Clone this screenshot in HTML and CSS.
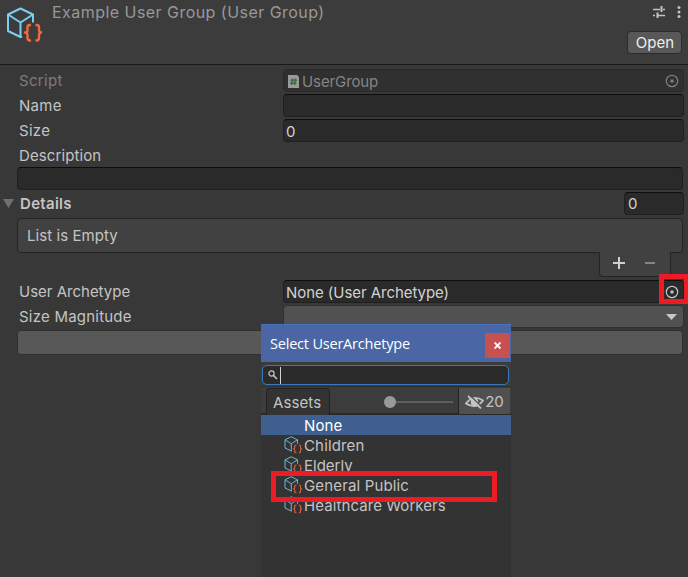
FILE: index.html
```html
<!DOCTYPE html>
<html lang="en">
<head>
<meta charset="utf-8">
<title>Inspector</title>
<link rel="stylesheet" href="styles.css">
</head>
<body>
<svg class="defs" width="0" height="0">
  <symbol id="asset" viewBox="0 0 36 36">
    <g fill="none" stroke-linejoin="round">
      <path stroke="#7bcdf2" stroke-width="2" d="M27 15.500V7.500L14.500 1.500L2 7.500V24L14.500 30H16M2 7.500L14.500 15.500L27 7.500M14.500 15.500V30"/>
      <path stroke="#f2683c" stroke-width="2.400" d="M25 18H24Q21.500 18 21.500 20V23Q21.500 25.500 19 25.500Q21.500 25.500 21.500 28V31Q21.500 33.500 24 33.500H25M29.500 18H30.500Q33 18 33 20V23Q33 25.500 35.500 25.500Q33 25.500 33 28V31Q33 33.500 30.500 33.500H29.500"/>
    </g>
  </symbol>
  <symbol id="picker" viewBox="0 0 14 14">
    <circle cx="7" cy="7" r="5.700" fill="none" stroke="currentColor" stroke-width="1.200"/>
    <rect x="5.500" y="5.500" width="3" height="3" fill="currentColor"/>
  </symbol>
</svg>
<main class="inspector">
  <header class="head">
    <svg class="head-icon" width="36" height="36"><use href="#asset"/></svg>
    <h1 class="title">Example User Group (User Group)</h1>
    <div class="head-side">
      <div class="head-tools">
        <svg width="12" height="12" viewBox="0 0 12 12" stroke="#c4c4c4" fill="none"><path stroke-width="1.300" d="M0 3.500H7M10 3.500H12M0 9.500H2M5 9.500H12"/><path stroke-width="2" d="M8.500 0V6M4.500 6.500V12"/></svg>
        <svg width="4" height="12" viewBox="0 0 4 12" fill="#c4c4c4"><circle cx="2" cy="1.500" r="1.500"/><circle cx="2" cy="6" r="1.500"/><circle cx="2" cy="10.500" r="1.500"/></svg>
      </div>
      <button class="open">Open</button>
    </div>
  </header>
  <section class="form">
    <div class="row"><span class="label off">Script</span><div class="field off"><svg class="doc" width="11" height="13" viewBox="0 0 11 13"><path fill="#9a9a9a" d="M0 0H9L11 2V13H0Z"/><path stroke="#41694a" stroke-width="1.400" d="M4.500 3.500L3.700 10M7.500 3.500L6.700 10M2.500 5.300H9M2 8H8.500"/></svg><span class="script">UserGroup</span><svg class="pick" width="14" height="14"><use href="#picker"/></svg></div></div>
    <div class="row"><span class="label">Name</span><div class="field"></div></div>
    <div class="row"><span class="label">Size</span><div class="field">0</div></div>
    <div class="row"><span class="label description">Description</span></div>
    <div class="field wide"></div>
    <div class="row details"><svg class="fold" width="11" height="9"><path fill="#707070" d="M0 0H11L5.500 9Z"/></svg><strong class="label">Details</strong><div class="field count">0</div></div>
    <div class="list">List is Empty</div>
    <div class="list-foot"><svg width="48" height="14" viewBox="0 0 48 14"><path stroke="#d0d0d0" stroke-width="2" d="M0 7H12M6 1V13"/><path stroke="#858585" stroke-width="2" d="M32 7H42"/></svg></div>
    <div class="row"><span class="label archetype">User Archetype</span><div class="field"><span class="none-value">None (User Archetype)</span><svg class="pick" width="14" height="14"><use href="#picker"/></svg></div></div>
    <div class="row"><span class="label magnitude">Size Magnitude</span><div class="field drop"><svg width="11" height="6"><path fill="#c8c8c8" d="M0 0H11L5.500 6Z"/></svg></div></div>
    <div class="bar"></div>
  </section>
  <div class="mark mark-picker"></div>
</main>
<aside class="popup">
  <div class="popup-title"><span>Select UserArchetype</span><button class="close"><svg width="7" height="7"><path stroke="#fff" stroke-width="1.900" d="M.5.500L6.500 6.500M6.500.500L.5 6.500"/></svg></button></div>
  <div class="search-wrap"><div class="search"><svg width="10" height="10" fill="none" stroke="#c4c4c4"><circle cx="3.500" cy="3.500" r="2.600" stroke-width="1.200"/><path stroke-width="1.600" d="M5.500 5.500L9 9"/></svg><i class="caret"></i></div></div>
  <div class="toolbar"><span class="tab">Assets</span><div class="slider"><i class="knob"></i></div><div class="hidden-count"><svg width="19" height="14" viewBox="0 0 19 14" fill="none" stroke="#c4c4c4"><path stroke-width="1.800" d="M1 8.500Q8-1 18 5.500Q11 15 1 8.500Z"/><circle cx="9.500" cy="7" r="3.800" fill="#c4c4c4" stroke="none"/><path stroke="#505050" stroke-width="1.300" d="M4.500 0L17 12"/><path stroke-width="1.800" d="M3 1L16 13.500"/></svg><span>20</span></div></div>
  <ul class="assets">
    <li class="selected"><span>None</span></li>
    <li><svg width="18" height="18"><use href="#asset"/></svg><span>Children</span></li>
    <li><svg width="18" height="18"><use href="#asset"/></svg><span class="elderly">Elderly</span></li>
    <li><svg width="18" height="18"><use href="#asset"/></svg><span>General Public</span></li>
    <li><svg width="18" height="18"><use href="#asset"/></svg><span class="workers">Healthcare Workers</span></li>
  </ul>
  <div class="mark mark-item"></div>
</aside>
</body>
</html>
```

FILE: styles.css
```css
* { box-sizing: border-box; }
body { margin: 0; width: 688px; height: 577px; overflow: hidden; position: relative; background: #383838; color: #c4c4c4; font: 15px/20px Inter, sans-serif; letter-spacing: .3px; }
button { font: inherit; letter-spacing: inherit; padding: 0; }
svg { display: block; flex: none; }
.defs { position: absolute; }
.head { height: 65px; display: flex; background: #3c3c3c; border-bottom: 1px solid #1a1a1a; padding: 0 6px; }
.head-icon { margin-top: 7px; }
.title { margin: 2px 0 0 10px; font-size: 16px; font-weight: 400; letter-spacing: .46px; color: #989898; }
.head-side { margin-left: auto; }
.head-tools { display: flex; justify-content: flex-end; gap: 12px; padding-top: 6px; margin-right: 1px; }
.open { display: block; margin-top: 13px; width: 55px; height: 23px; border: 1px solid #2b2b2b; border-radius: 4px; background: #585858; color: #eee; line-height: 19px; letter-spacing: .1px; padding: 0 0 1px 1px; }
.form { padding: 4px 4px 0 17px; }
.row { height: 23px; margin-bottom: 2px; display: flex; align-items: center; }
.label { width: 266px; padding-left: 2px; }
.description { letter-spacing: .1px; }
.archetype { letter-spacing: 0; }
.magnitude { letter-spacing: .22px; }
.off { color: #7c7c7c; }
.field { flex: 1; height: 23px; border: 1px solid #202020; border-top-color: #0d0d0d; border-radius: 4px; background: #2a2a2a; color: #d2d2d2; padding: 2px 2px 0; display: flex; align-items: center; }
.field.off { background: #303030; border-color: #2a2a2a; color: #858585; padding-left: 4px; }
.script { letter-spacing: -.1px; }
.none-value { letter-spacing: -.05px; }
.doc { margin-right: 3px; }
.pick { margin: -2px 2.500px 0 auto; color: #c4c4c4; }
.off .pick { color: #808080; }
.wide { margin: -2px 1px 2px 0; }
.details { margin: 0 0 3px -14px; }
.fold { margin-right: 4px; }
.details .label { flex: 1; font-weight: 600; }
.details .count { flex: 0 0 60px; padding: 1px 3px 0; }
.list { height: 35px; margin-right: 1px; border: 1px solid #242424; border-radius: 4px; background: #414141; padding: 7px 9px; letter-spacing: .07px; }
.list-foot { position: relative; width: 72px; height: 25px; margin: -1px 13px 3px auto; border: 1px solid #242424; border-top: 0; border-radius: 0 0 4px 4px; background: #414141; padding: 4px 13px; }
.field.drop { background: #515151; border-color: #303030; justify-content: flex-end; padding: 0 6px 0 0; }
.bar { height: 25px; margin-right: 1px; border: 1px solid #303030; border-radius: 4px; background: #585858; }
.mark { position: absolute; border: 5px solid #ed1c24; }
.mark-picker { left: 659px; top: 274px; width: 29px; height: 30px; border-right-width: 4px; }
.popup { position: absolute; left: 261px; top: 324px; width: 250px; height: 253px; background: #333; }
.popup-title { height: 38px; display: flex; justify-content: space-between; background: #4a66a4; border-top: 1px solid #4773bd; color: #fff; font: 14.500px/37px "Open Sans", sans-serif; letter-spacing: -.2px; padding: 0 1px 0 9px; }
.close { width: 25px; height: 25px; margin-top: 8px; border: 0; background: #c75050; display: grid; place-items: center; }
.search-wrap { height: 25px; padding: 3px 2px 0 1px; background: #3c3c3c; border-bottom: 1px solid #303030; }
.search { height: 20px; border: 1px solid #3a79bb; border-radius: 5px; background: #2a2a2a; display: flex; align-items: center; padding-left: 5px; }
.caret { width: 1px; height: 17px; margin-left: 2px; background: #d2d2d2; }
.toolbar { height: 28px; border-bottom: 2px solid #292929; background: #3c3c3c; display: flex; padding: 1px 1px 0 5px; }
.tab { width: 64px; height: 27px; border: 1px solid #232323; border-bottom: 0; border-radius: 4px 4px 0 0; background: #333; padding: 4px 0 0 6px; letter-spacing: .1px; }
.slider { width: 65px; height: 2px; margin: 13px 5px 0 59px; background: #5e5e5e; position: relative; }
.knob { position: absolute; left: -5px; top: -5px; width: 12px; height: 12px; border-radius: 50%; background: #999; }
.hidden-count { width: 52px; height: 26px; border-left: 1px solid #232323; background: #505050; display: flex; align-items: center; gap: 1px; padding: 1px 0 0 6px; letter-spacing: -.2px; }
.assets { list-style: none; margin: 0; padding: 0; }
.assets li { height: 20px; display: flex; align-items: center; gap: 2px; padding: 2px 0 0 23px; letter-spacing: .15px; }
.assets svg { opacity: .85; margin-top: -2px; }
.assets .selected { background: #3e5f90; color: #fff; padding-left: 43px; }
.assets .elderly { letter-spacing: 0; }
.assets .workers { letter-spacing: .06px; }
.mark-item { left: 10px; top: 147px; width: 226px; height: 31px; }
```
